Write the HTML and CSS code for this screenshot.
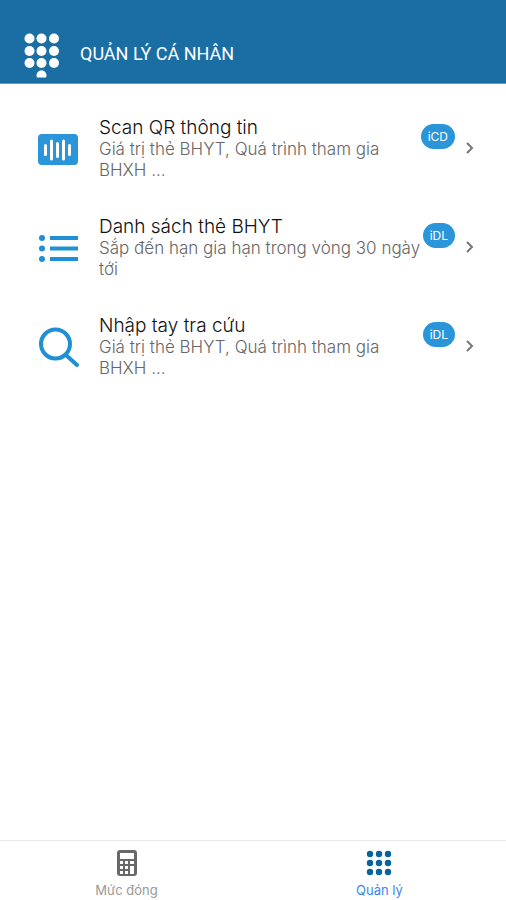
FILE: index.html
```html
<!DOCTYPE html>
<html lang="vi">
<head>
    <meta charset="UTF-8">
    <meta name="viewport" content="width=device-width, initial-scale=1.0">
    <title>Quản lý cá nhân</title>
    <link rel="stylesheet" href="styles.css">
</head>
<body>
    <header class="header">
        <svg class="header-icon" width="36" height="46" viewBox="0 0 36 46" fill="#fff" aria-hidden="true">
            <circle cx="5.500" cy="6.500" r="5"/><circle cx="17.500" cy="6.500" r="5"/><circle cx="30" cy="6.500" r="5"/>
            <circle cx="5.500" cy="19" r="5"/><circle cx="17.500" cy="19" r="5"/><circle cx="30" cy="19" r="5"/>
            <circle cx="5.500" cy="31" r="5"/><circle cx="17.500" cy="31" r="5"/><circle cx="30" cy="31" r="5"/>
            <path d="M13 45.500a5 5 0 1 1 9 0z"/>
        </svg>
        <h1>QUẢN LÝ CÁ NHÂN</h1>
    </header>
    <main class="menu">
        <a class="menu-item" href="#">
            <svg class="menu-icon" width="42" height="42" viewBox="0 0 42 42" aria-hidden="true">
                <rect x="1" y="6" width="40" height="31" rx="4" fill="#2a95d9"/>
                <path d="M8.500 17.500v9M14.500 13v18M20.500 15.500v13M26.500 13v18M32.500 17.500v9" stroke="#fff" stroke-width="3" stroke-linecap="round"/>
            </svg>
            <div class="menu-text">
                <h2>Scan QR thông tin</h2>
                <p>Giá trị thẻ BHYT, Quá trình tham gia BHXH ...</p>
            </div>
            <span class="badge">iCD</span>
            <svg class="chevron" width="10" height="14" viewBox="0 0 10 14" fill="none" stroke="#777" stroke-width="2" aria-hidden="true"><path d="M2 1l5 5-5 5"/></svg>
        </a>
        <a class="menu-item" href="#">
            <svg class="menu-icon" width="42" height="42" viewBox="0 0 42 42" fill="#1f8fd6" aria-hidden="true">
                <circle cx="5" cy="11" r="3"/><circle cx="5" cy="21.500" r="3"/><circle cx="5" cy="32" r="3"/>
                <rect x="13" y="9" width="28" height="4"/><rect x="13" y="19.500" width="28" height="4"/><rect x="13" y="30" width="28" height="4"/>
            </svg>
            <div class="menu-text">
                <h2>Danh sách thẻ BHYT</h2>
                <p>Sắp đến hạn gia hạn trong vòng 30 ngày tới</p>
            </div>
            <span class="badge">iDL</span>
            <svg class="chevron" width="10" height="14" viewBox="0 0 10 14" fill="none" stroke="#777" stroke-width="2" aria-hidden="true"><path d="M2 1l5 5-5 5"/></svg>
        </a>
        <a class="menu-item" href="#">
            <svg class="menu-icon" width="42" height="42" viewBox="0 0 42 42" fill="none" stroke="#1f8fd6" stroke-width="4" stroke-linecap="round" aria-hidden="true">
                <circle cx="18.500" cy="18" r="14.500"/><path d="M30 30l10 9"/>
            </svg>
            <div class="menu-text">
                <h2>Nhập tay tra cứu</h2>
                <p>Giá trị thẻ BHYT, Quá trình tham gia BHXH ...</p>
            </div>
            <span class="badge">iDL</span>
            <svg class="chevron" width="10" height="14" viewBox="0 0 10 14" fill="none" stroke="#777" stroke-width="2" aria-hidden="true"><path d="M2 1l5 5-5 5"/></svg>
        </a>
    </main>
    <nav class="tabs">
        <a class="tab" href="#">
            <svg width="28" height="28" viewBox="0 0 28 28" aria-hidden="true">
                <rect x="4" y="1" width="20" height="26" rx="3" fill="#686868"/>
                <rect x="7" y="4" width="14" height="6" fill="#fff"/>
                <path d="M7 12h3v3H7zM12 12h3v3h-3zM17 12h4v3h-4zM7 17h3v3H7zM12 17h3v3h-3zM7 22h3v3H7zM12 22h3v3h-3zM17 17h4v8h-4z" fill="#fff"/>
            </svg>
            <span>Mức đóng</span>
        </a>
        <a class="tab active" href="#">
            <svg width="28" height="28" viewBox="0 0 28 28" fill="#07639b" aria-hidden="true">
                <circle cx="4" cy="5" r="3.200"/><circle cx="13" cy="5" r="3.200"/><circle cx="22" cy="5" r="3.200"/>
                <circle cx="4" cy="14" r="3.200"/><circle cx="13" cy="14" r="3.200"/><circle cx="22" cy="14" r="3.200"/>
                <circle cx="4" cy="23" r="3.200"/><circle cx="13" cy="23" r="3.200"/><circle cx="22" cy="23" r="3.200"/>
            </svg>
            <span>Quản lý</span>
        </a>
    </nav>
</body>
</html>
```

FILE: styles.css
```css
* {
    box-sizing: border-box;
}

body {
    font-family: Inter, Roboto, sans-serif;
    margin: 0;
    min-height: 100vh;
    display: flex;
    flex-direction: column;
    background-color: #fff;
    color: #111;
}

h1,
h2,
p {
    margin: 0;
    font-weight: normal;
}

a {
    color: inherit;
    text-decoration: none;
}

.header {
    display: flex;
    align-items: center;
    gap: 20px;
    padding: 32px 24px 5px;
    background-color: #1a6ea4;
    border-bottom: 1px solid #5f9bc2;
    color: #fff;
}

.header h1 {
    font-family: Roboto, sans-serif;
    font-size: 18px;
    line-height: 24px;
    padding-bottom: 2px;
}

.menu {
    flex: 1;
    padding-top: 16px;
}

.menu-item {
    display: flex;
    align-items: center;
    padding: 17px 31px 18px 37px;
}

.menu-icon {
    flex: none;
    margin-right: 20px;
}

.menu-text {
    flex: 1;
}

.menu-text h2 {
    font-size: 19px;
    font-weight: 300;
    line-height: 22px;
}

.menu-text p {
    font-size: 17px;
    font-weight: 300;
    line-height: 21px;
    color: #666;
}

.badge {
    align-self: flex-start;
    margin: 7px 10px 0 0;
    padding: 0 7px;
    border-radius: 13px;
    background-color: #2a95d9;
    color: #fff;
    font-size: 12px;
    line-height: 25px;
}

.chevron {
    flex: none;
}

.tabs {
    display: flex;
    border-top: 1px solid #e8e8e8;
}

.tab {
    flex: 1;
    display: flex;
    flex-direction: column;
    align-items: center;
    gap: 3px;
    padding: 8px 0 0;
    font-size: 13px;
    line-height: 20px;
    color: #999;
}

.tab.active {
    color: #3b86f0;
}
```
